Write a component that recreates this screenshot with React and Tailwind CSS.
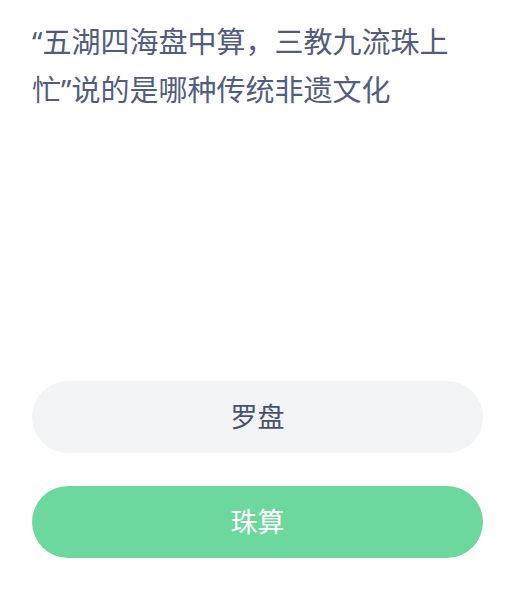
export default function App() {
  const font = { fontFamily: '"Noto Sans", "Noto Sans CJK SC", sans-serif' };
  return (
    <div className="w-[515px] h-[589px] bg-white overflow-hidden" style={font}>
      <div className="pl-[32px] pr-[20px] pt-[18px] text-[29px] leading-[48px] text-[#525d7d]">
        “五湖四海盘中算，三教九流珠上忙”说的是哪种传统非遗文化
      </div>
      <div className="mt-[267px] px-[32px] flex flex-col gap-[33px]">
        <div className="h-[72px] rounded-full bg-[#f3f4f6] flex items-center justify-center text-[27px] text-[#48526a]">
          罗盘
        </div>
        <div className="h-[72px] rounded-full bg-[#6dd89e] flex items-center justify-center text-[27px] text-white">
          珠算
        </div>
      </div>
    </div>
  );
}
